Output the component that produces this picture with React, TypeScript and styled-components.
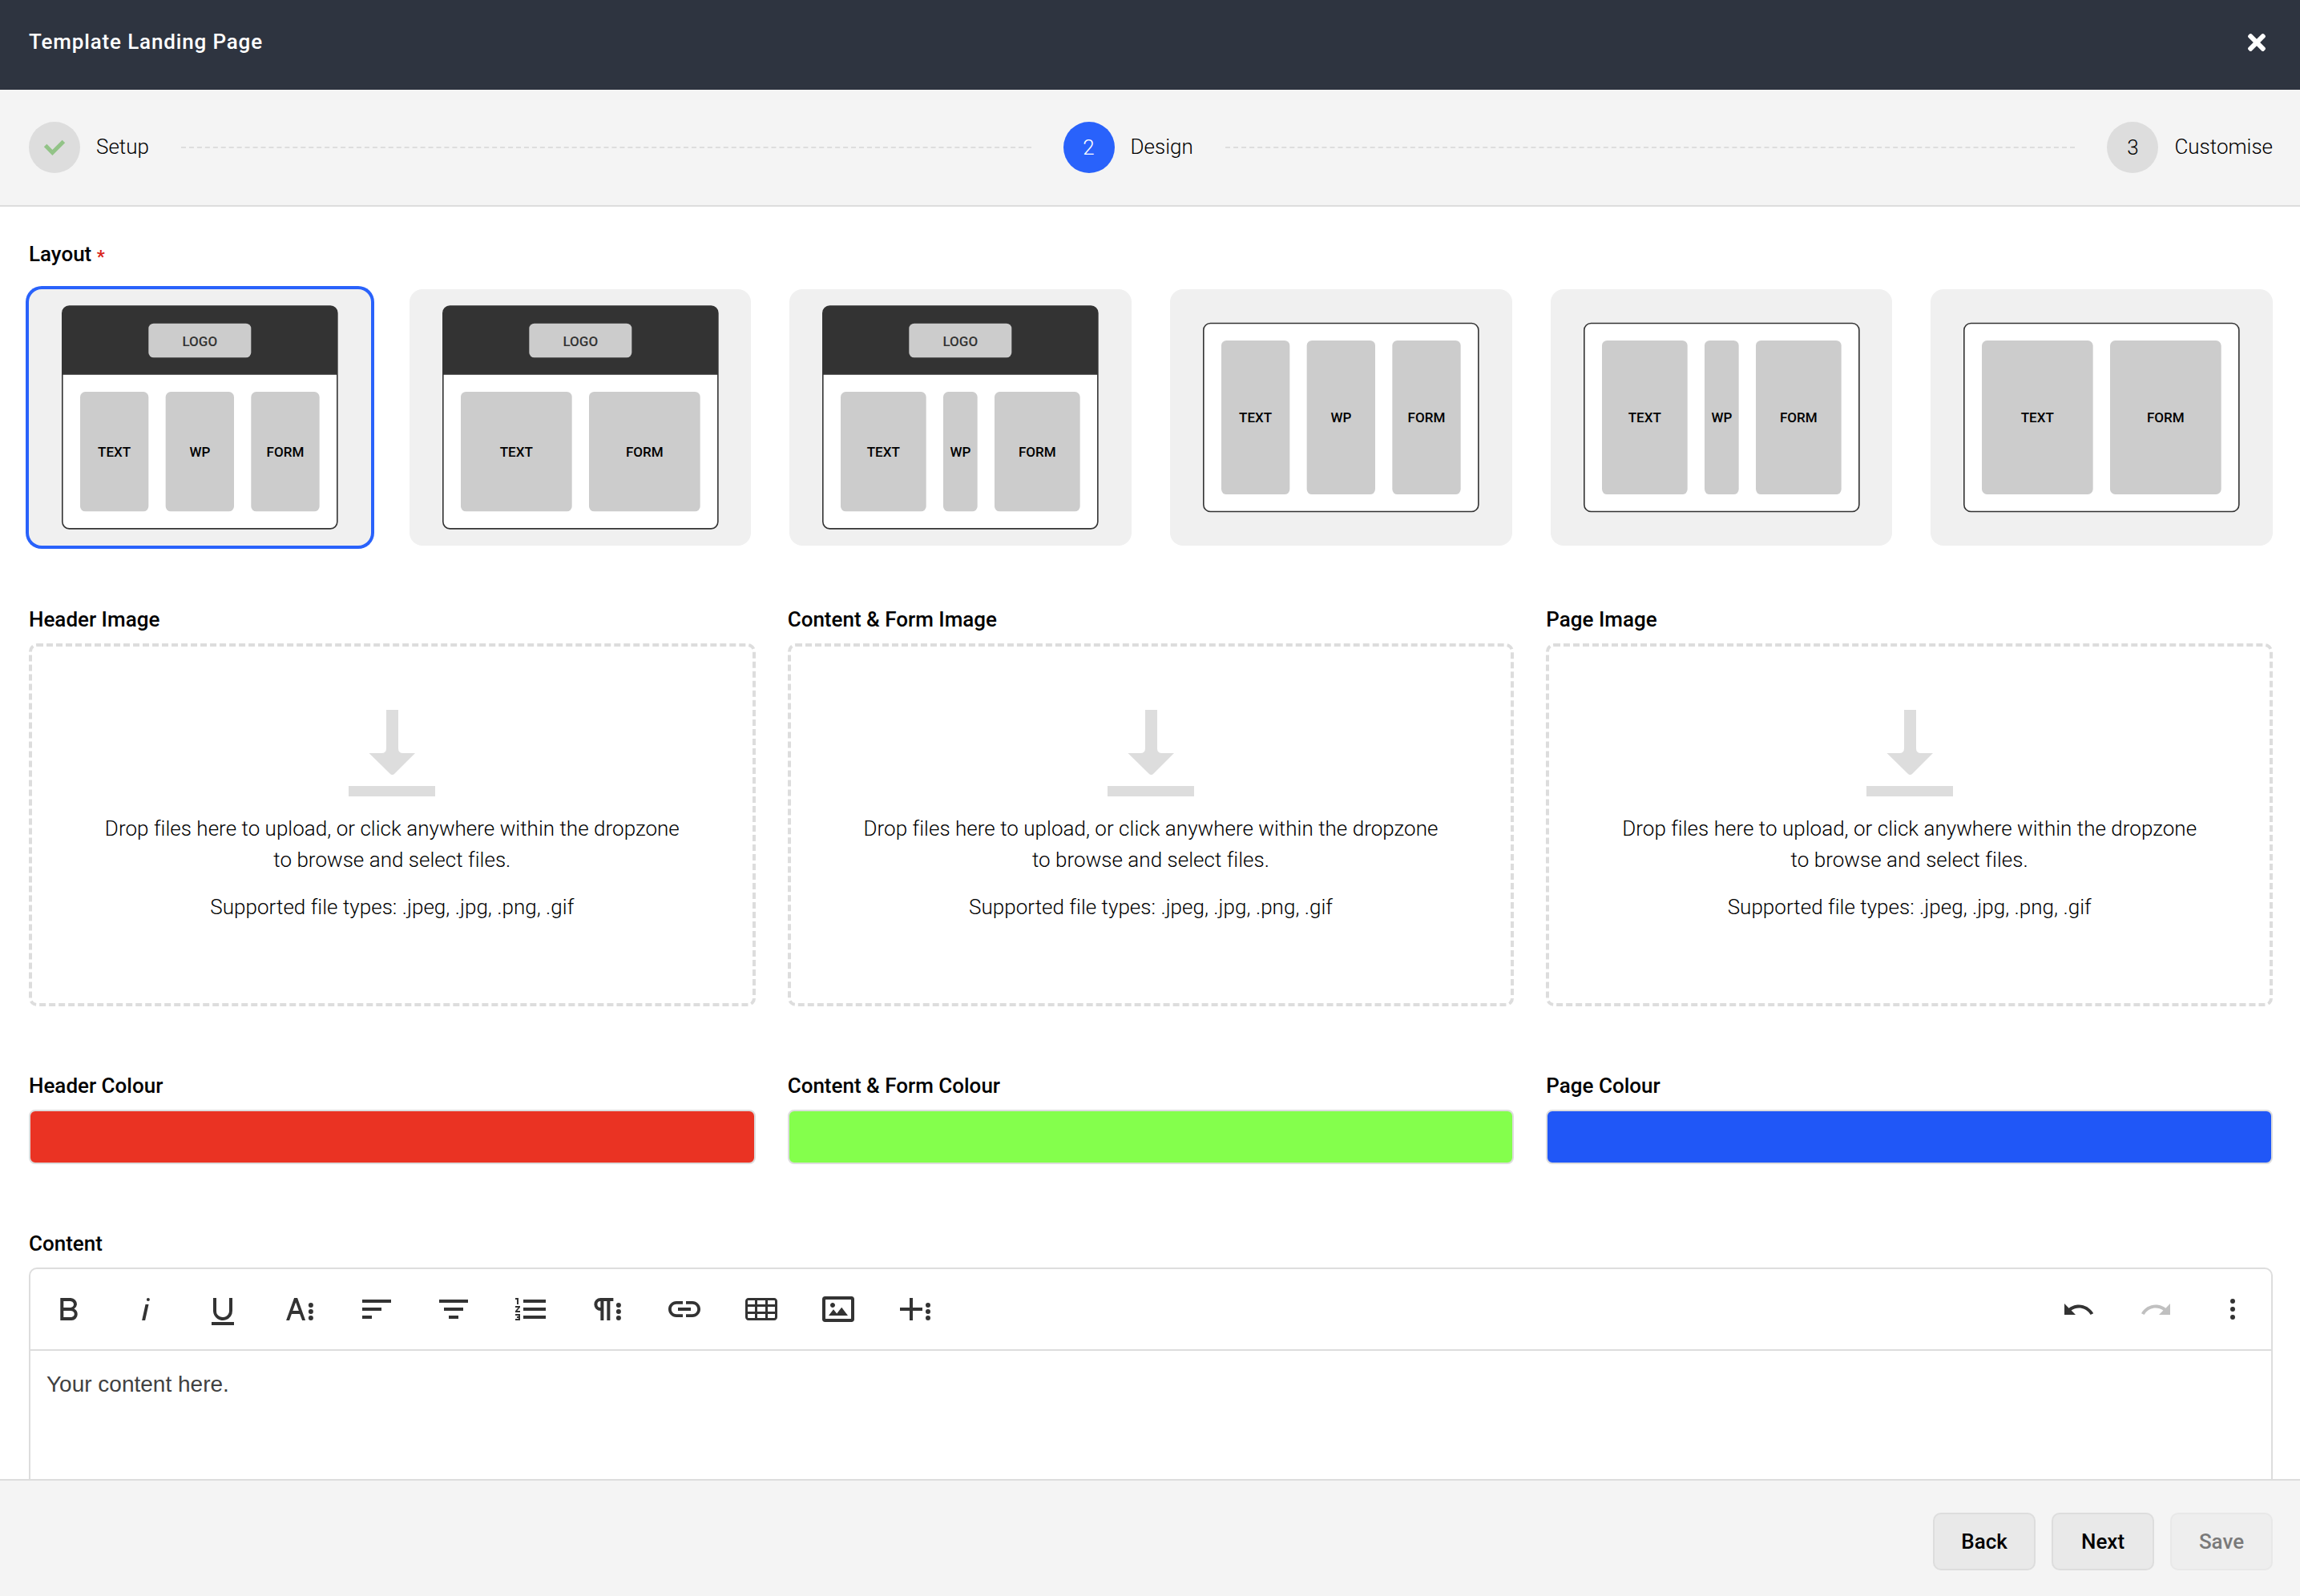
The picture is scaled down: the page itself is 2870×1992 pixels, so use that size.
import { createGlobalStyle, styled } from "styled-components";
import { FaTimes } from "react-icons/fa";

type Block = { x: number; width: number; label: string };

const threeEven: Block[] = [
  { x: 30, width: 40, label: "TEXT" },
  { x: 80, width: 40, label: "WP" },
  { x: 130, width: 40, label: "FORM" },
];

const threeNarrow: Block[] = [
  { x: 30, width: 50, label: "TEXT" },
  { x: 90, width: 20, label: "WP" },
  { x: 120, width: 50, label: "FORM" },
];

const two: Block[] = [
  { x: 30, width: 65, label: "TEXT" },
  { x: 105, width: 65, label: "FORM" },
];

const layouts = [
  { id: 1, header: true, blocks: threeEven },
  { id: 2, header: true, blocks: two },
  { id: 3, header: true, blocks: threeNarrow },
  { id: 4, header: false, blocks: threeEven },
  { id: 5, header: false, blocks: threeNarrow },
  { id: 6, header: false, blocks: two },
];

const images = ["Header Image", "Content & Form Image", "Page Image"];

const colours = [
  { label: "Header Colour", value: "#ea3323" },
  { label: "Content & Form Colour", value: "#84ff4c" },
  { label: "Page Colour", value: "#2057f7" },
];

const tools = [
  {
    name: "Bold",
    d: "M15.25,11.8h0A3.68,3.68,0,0,0,17,9a3.93,3.93,0,0,0-3.86-4H6.65V19h7a3.74,3.74,0,0,0,3.7-3.78V15.1A3.64,3.64,0,0,0,15.25,11.8ZM8.65,7h4.2a2.09,2.09,0,0,1,2,1.3,2.09,2.09,0,0,1-1.37,2.61,2.23,2.23,0,0,1-.63.09H8.65Zm4.6,10H8.65V13h4.6a2.09,2.09,0,0,1,2,1.3,2.09,2.09,0,0,1-1.37,2.61A2.23,2.23,0,0,1,13.25,17Z",
  },
  {
    name: "Italic",
    d: "M11.76,9h2l-2.2,10h-2Zm1.68-4a1,1,0,1,0,1,1,1,1,0,0,0-1-1Z",
  },
  {
    name: "Underline",
    d: "M19,20v2H5V20Zm-3-6.785a4,4,0,0,1-5.74,3.4A3.75,3.75,0,0,1,8,13.085V5H6v8.215a6,6,0,0,0,8,5.44,5.851,5.851,0,0,0,4-5.65V5H16Z",
  },
  {
    name: "More Text",
    d: "M13.55,19h2l-5-14h-2l-5,14h2l1.4-4h5.1Zm-5.9-6,1.9-5.2,1.9,5.2Zm12.8,4.5a1.5,1.5,0,1,1-1.5-1.5A1.5,1.5,0,0,1,20.45,17.5Zm0-4a1.5,1.5,0,1,1-1.5-1.5A1.5,1.5,0,0,1,20.45,13.5Zm0-4A1.5,1.5,0,1,1,18.95,8,1.5,1.5,0,0,1,20.45,9.5Z",
  },
  { name: "Align Left", d: "M3,18h6v-2H3V18z M3,11v2h12v-2H3z M3,6v2h18V6H3z" },
  {
    name: "Align Center",
    d: "M9,18h6v-2H9V18z M6,11v2h12v-2H6z M3,6v2h18V6H3z",
  },
  {
    name: "Ordered List",
    d: "M2.5,16h2v.5h-1v1h1V18h-2v1h3V15h-3Zm1-7h1V5h-2V6h1Zm-1,2H4.3L2.5,13.1V14h3V13H3.7l1.8-2.1V10h-3Zm5-5V8h14V6Zm0,12h14V16H7.5Zm0-5h14V11H7.5Z",
  },
  {
    name: "More Paragraph",
    d: "M7.68,5a4,4,0,0,0,0,8V19h2V7h2V19h2V7h2V5ZM7.68,11a2,2,0,0,1,0-4ZM20.45,17.5a1.5,1.5,0,1,1-1.5-1.5A1.5,1.5,0,0,1,20.45,17.5Zm0-4a1.5,1.5,0,1,1-1.5-1.5A1.5,1.5,0,0,1,20.45,13.5Zm0-4A1.5,1.5,0,1,1,18.95,8,1.5,1.5,0,0,1,20.45,9.5Z",
  },
  {
    name: "Insert Link",
    d: "M3.9 12c0-1.71 1.39-3.1 3.1-3.1h4V7H7c-2.76 0-5 2.24-5 5s2.24 5 5 5h4v-1.9H7c-1.71 0-3.1-1.39-3.1-3.1zM8 13h8v-2H8v2zm9-6h-4v1.9h4c1.71 0 3.1 1.39 3.1 3.1s-1.39 3.1-3.1 3.1h-4V17h4c2.76 0 5-2.24 5-5s-2.24-5-5-5z",
  },
  {
    name: "Insert Table",
    d: "M20,5H4C2.9,5,2,5.9,2,7v2v1.5v3V15v2c0,1.1,0.9,2,2,2h16c1.1,0,2-0.9,2-2v-2v-1.5v-3V9V7C22,5.9,21.1,5,20,5z M9.5,13.5v-3h5v3H9.5z M14.5,15v2.5h-5V15H14.5z M9.5,9V6.5h5V9H9.5z M3.5,7c0-0.3,0.2-0.5,0.5-0.5h4V9H3.5V7z M8,10.5v3H3.5v-3H8z M3.5,17v-2H8v2.5H4C3.7,17.5,3.5,17.3,3.5,17z M20.5,17c0,0.3-0.2,0.5-0.5,0.5h-4V15h4.5V17z M20.5,13.5H16v-3h4.5V13.5z M16,9V6.5h4c0.3,0,0.5,0.2,0.5,0.5v2H16z",
  },
  {
    name: "Insert Image",
    d: "M14.2,11l3.8,5H6l3-3.9l2.1,2.7L14,11H14.2z M8.5,11c0.8,0,1.5-0.7,1.5-1.5S9.3,8,8.5,8S7,8.7,7,9.5C7,10.3,7.7,11,8.5,11z M22,5.7v12.6c0,1-0.7,1.7-1.7,1.7H3.7c-1,0-1.7-0.7-1.7-1.7V5.7C2,4.7,2.7,4,3.7,4h16.6C21.3,4,22,4.7,22,5.7z M20,6.3C20,6.1,19.9,6,19.7,6H4.3C4.1,6,4,6.1,4,6.3v11.4C4,17.9,4.1,18,4.3,18h15.4c0.2,0,0.3-0.1,0.3-0.3V6.3z",
  },
  {
    name: "More Rich",
    d: "M16.5,13h-6v6h-2V13h-6V11h6V5h2v6h6Zm5,4.5A1.5,1.5,0,1,1,20,16,1.5,1.5,0,0,1,21.5,17.5Zm0-4A1.5,1.5,0,1,1,20,12,1.5,1.5,0,0,1,21.5,13.5Zm0-4A1.5,1.5,0,1,1,20,8,1.5,1.5,0,0,1,21.5,9.5Z",
  },
];

const historyTools = [
  {
    name: "Undo",
    disabled: false,
    d: "M10.4,9.4c-1.7,0.3-3.2,0.9-4.6,2L3,8.5v7h7l-2.7-2.7c3.7-2.6,8.8-1.8,11.5,1.9c0.2,0.3,0.4,0.5,0.5,0.8l1.8-0.9C18.9,10.8,14.7,8.7,10.4,9.4z",
  },
  {
    name: "Redo",
    disabled: true,
    d: "M13.6,9.4c1.7,0.3,3.2,0.9,4.6,2L21,8.5v7h-7l2.7-2.7C13,10.1,7.9,11,5.3,14.7c-0.2,0.3-0.4,0.5-0.5,0.8L3,14.6C5.1,10.8,9.3,8.7,13.6,9.4z",
  },
  {
    name: "More Misc",
    disabled: false,
    d: "M13.5,17a1.5,1.5,0,1,1-3,0a1.5,1.5,0,1,1,3,0Zm0-5a1.5,1.5,0,1,1-3,0a1.5,1.5,0,1,1,3,0Zm0-5a1.5,1.5,0,1,1-3,0a1.5,1.5,0,1,1,3,0Z",
  },
];

const LayoutPreview = ({
  header,
  blocks,
}: {
  header: boolean;
  blocks: Block[];
}) => {
  const top = header ? 60 : 30;
  const height = header ? 70 : 90;

  return (
    <Preview viewBox="0 0 200 150">
      <rect
        x="19.6"
        y={header ? 9.9 : 19.9}
        width="160.8"
        height={header ? 130.2 : 110.2}
        rx="4"
        fill="#fff"
        stroke="#333"
        strokeWidth="0.75"
      />
      {header && (
        <>
          <path
            d="M19.6 50V13.9a4 4 0 0 1 4-4h152.8a4 4 0 0 1 4 4V50z"
            fill="#333"
          />
          <rect x="70" y="20" width="60" height="20" rx="3" fill="#ccc" />
          <text x="100" y="33.1" fill="#333">
            LOGO
          </text>
        </>
      )}
      {blocks.map(({ x, width, label }) => (
        <g key={label}>
          <rect x={x} y={top} width={width} height={height} rx="3" fill="#ccc" />
          <text x={x + width / 2} y={top + height / 2 + 2.8}>
            {label}
          </text>
        </g>
      ))}
    </Preview>
  );
};

const Dropzone = () => (
  <S.Dropzone>
    <DropIcon viewBox="0 0 108 108">
      <path d="M47 0h15v48q0 6 6 6h15L57.500 79.500q-3 3-6 0L25.500 54h15.500q6 0 6-6z" />
      <path d="M0 95h108v13H0z" />
    </DropIcon>
    <DropText>
      Drop files here to upload, or click anywhere within the dropzone
      <br />
      to browse and select files.
    </DropText>
    <DropText>Supported file types: .jpeg, .jpg, .png, .gif</DropText>
  </S.Dropzone>
);

const App = () => {
  return (
    <>
      <GlobalStyle />
      <S.Modal>
        <S.Header>
          <Title>Template Landing Page</Title>
          <CloseBtn aria-label="Close">
            <FaTimes />
          </CloseBtn>
        </S.Header>
        <S.Steps>
          <Step>
            <StepCircle>
              <svg width="28" height="20" viewBox="0 0 28 20">
                <path
                  d="M2.600 7.600L11.400 16.400L25.400 2.400"
                  fill="none"
                  stroke="#92c387"
                  strokeWidth="5"
                />
              </svg>
            </StepCircle>
            <StepName>Setup</StepName>
          </Step>
          <StepLine />
          <Step>
            <StepCircle $active>2</StepCircle>
            <StepName>Design</StepName>
          </Step>
          <StepLine />
          <Step>
            <StepCircle>3</StepCircle>
            <StepName>Customise</StepName>
          </Step>
        </S.Steps>
        <S.Body>
          <Label>
            Layout <Required>*</Required>
          </Label>
          <LayoutGrid>
            {layouts.map(({ id, header, blocks }) => (
              <LayoutCard key={id} $selected={id === 1}>
                <LayoutPreview header={header} blocks={blocks} />
              </LayoutCard>
            ))}
          </LayoutGrid>
          <FieldGrid $top={77.5}>
            {images.map((label) => (
              <div key={label}>
                <Label>{label}</Label>
                <Dropzone />
              </div>
            ))}
          </FieldGrid>
          <FieldGrid $top={84}>
            {colours.map(({ label, value }) => (
              <div key={label}>
                <Label>{label}</Label>
                <Swatch $colour={value} />
              </div>
            ))}
          </FieldGrid>
          <ContentField>
            <Label>Content</Label>
            <S.Editor>
              <Toolbar>
                <ToolGroup>
                  {tools.map(({ name, d }) => (
                    <ToolBtn key={name} aria-label={name}>
                      <svg viewBox="0 0 24 24">
                        <path d={d} />
                      </svg>
                    </ToolBtn>
                  ))}
                </ToolGroup>
                <ToolGroup>
                  {historyTools.map(({ name, d, disabled }) => (
                    <ToolBtn key={name} aria-label={name} disabled={disabled}>
                      <svg viewBox="0 0 24 24">
                        <path d={d} />
                      </svg>
                    </ToolBtn>
                  ))}
                </ToolGroup>
              </Toolbar>
              <EditorText>Your content here.</EditorText>
            </S.Editor>
          </ContentField>
        </S.Body>
        <S.Footer>
          <Btn>Back</Btn>
          <Btn>Next</Btn>
          <Btn disabled>Save</Btn>
        </S.Footer>
      </S.Modal>
    </>
  );
};

export default App;

const GlobalStyle = createGlobalStyle`
  * {
    box-sizing: border-box;
  }
  body {
    margin: 0;
    font-family: Roboto, "Liberation Sans", sans-serif;
    font-size: 26px;
    font-weight: 300;
    color: #000;
  }
  button {
    padding: 0;
    border: none;
    background: none;
    font-family: inherit;
    cursor: pointer;
  }
`;

const Modal = styled.div`
  display: flex;
  flex-direction: column;
  height: 100vh;
  overflow: hidden;
  background: #fff;
`;

const Header = styled.header`
  display: flex;
  flex: none;
  justify-content: space-between;
  align-items: flex-start;
  height: 112px;
  padding: 37px 43px 0 36px;
  background: #2e3440;
  color: #fff;
`;

const Title = styled.h1`
  margin: 0;
  font-size: 26px;
  font-weight: 500;
  line-height: 30px;
  letter-spacing: 0.85px;
`;

const CloseBtn = styled.button`
  display: flex;
  color: #fff;
  svg {
    width: 22px;
    height: 32px;
  }
`;

const Steps = styled.div`
  display: flex;
  flex: none;
  align-items: center;
  gap: 40px;
  height: 146px;
  padding: 0 34px 0 36px;
  background: #f4f4f4;
  border-bottom: 2px solid #ddd;
`;

const Step = styled.div`
  display: flex;
  align-items: center;
  gap: 20px;
`;

const StepName = styled.span`
  padding-bottom: 2px;
  line-height: 30px;
`;

const StepCircle = styled.div<{ $active?: boolean }>`
  display: flex;
  justify-content: center;
  align-items: center;
  width: 64px;
  height: 64px;
  padding-bottom: 1px;
  border-radius: 50%;
  background: ${({ $active }) => ($active ? "#2962fb" : "#ddd")};
  color: ${({ $active }) => ($active ? "#fff" : "#000")};
  line-height: 30px;
`;

const StepLine = styled.div`
  flex: 1;
  border-top: 2px dashed #ddd;
`;

const Body = styled.main`
  flex: 1;
  min-height: 0;
  overflow: hidden;
  padding: 44px 34px 0 36px;
`;

const Label = styled.div`
  height: 30px;
  font-weight: 500;
  line-height: 30px;
`;

const Required = styled.span`
  color: #d9261c;
  font-size: 22px;
  font-weight: 700;
  line-height: 1;
  vertical-align: -2px;
`;

const LayoutGrid = styled.div`
  display: grid;
  grid-template-columns: repeat(6, 1fr);
  gap: 48px;
  margin-top: 28.5px;
`;

const LayoutCard = styled.div<{ $selected: boolean }>`
  height: 320px;
  border-radius: 16px;
  background: #f0f0f0;
  box-shadow: ${({ $selected }) => ($selected ? "0 0 0 4px #2962fb" : "none")};
`;

const Preview = styled.svg`
  display: block;
  width: 100%;
  height: 100%;
  text {
    font-size: 8px;
    font-weight: 500;
    text-anchor: middle;
  }
`;

const FieldGrid = styled.div<{ $top: number }>`
  display: grid;
  grid-template-columns: repeat(3, 1fr);
  gap: 40px;
  margin-top: ${({ $top }) => $top}px;
`;

const DropzoneBox = styled.div`
  display: flex;
  flex-direction: column;
  align-items: center;
  height: 453px;
  margin-top: 15px;
  padding-top: 79px;
  border: 4px dashed #ddd;
  border-radius: 10px;
  text-align: center;
`;

const DropIcon = styled.svg`
  width: 108px;
  height: 108px;
  margin-bottom: 21px;
  fill: #ddd;
`;

const DropText = styled.p`
  margin: 0 0 20px;
  line-height: 39px;
  letter-spacing: 0.03px;
`;

const Swatch = styled.div<{ $colour: string }>`
  height: 68px;
  margin-top: 15px;
  border: 2px solid #ddd;
  border-radius: 8px;
  background: ${({ $colour }) => $colour};
`;

const ContentField = styled.div`
  margin-top: 84px;
`;

const Editor = styled.div`
  height: 500px;
  margin-top: 15px;
  border: 2px solid #ddd;
  border-radius: 10px;
`;

const Toolbar = styled.div`
  display: flex;
  justify-content: space-between;
  border-bottom: 2px solid #ddd;
`;

const ToolGroup = styled.div`
  display: flex;
`;

const ToolBtn = styled.button`
  display: flex;
  justify-content: center;
  align-items: center;
  width: 96px;
  height: 100px;
  svg {
    width: 48px;
    height: 48px;
    fill: #333;
  }
  &:disabled svg {
    opacity: 0.3;
  }
`;

const EditorText = styled.div`
  padding: 26px 20px;
  color: #414141;
  font-family: "Liberation Sans", Arial, sans-serif;
  font-size: 28px;
  font-weight: 400;
  line-height: 32px;
`;

const Footer = styled.footer`
  display: flex;
  flex: none;
  justify-content: flex-end;
  gap: 20px;
  height: 146px;
  padding: 40px 34px 0;
  background: #f4f4f4;
  border-top: 2px solid #ddd;
`;

const Btn = styled.button`
  width: 128px;
  height: 72px;
  border: 2px solid #ddd;
  border-radius: 10px;
  background: #e9e9e9;
  color: #000;
  font-size: 26px;
  font-weight: 500;
  &:disabled {
    opacity: 0.5;
  }
`;

const S = {
  Modal,
  Header,
  Steps,
  Body,
  Dropzone: DropzoneBox,
  Editor,
  Footer,
};
